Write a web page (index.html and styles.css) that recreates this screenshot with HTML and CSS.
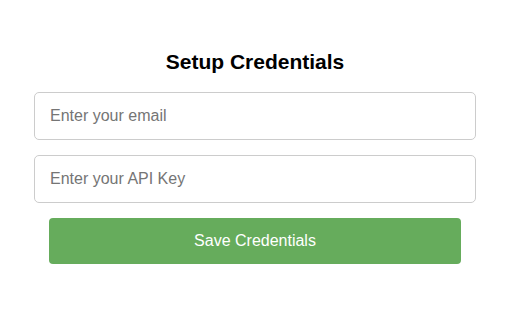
FILE: index.html
```html
<!DOCTYPE html>
<html>
<head>
<meta charset="utf-8">
<link rel="stylesheet" href="styles.css">
</head>
<body>
<div class="container">
  <h2 class="title">Setup Credentials</h2>
  <input class="field" type="email" placeholder="Enter your email">
  <input class="field" type="text" placeholder="Enter your API Key">
  <button class="save">Save Credentials</button>
</div>
</body>
</html>
```
FILE: styles.css
```css
html, body {
  margin: 0;
  padding: 0;
  background: #ffffff;
}
body {
  font-family: "Liberation Sans", Arial, sans-serif;
}
.container {
  width: 442px;
  margin: 0 0 0 34px;
  padding-top: 50px;
  display: flex;
  flex-direction: column;
  gap: 15px;
}
.title {
  margin: 0 0 3px 0;
  font-size: 21px;
  line-height: 24px;
  font-weight: bold;
  text-align: center;
  color: #000;
}
.field {
  box-sizing: border-box;
  height: 48px;
  width: 100%;
  margin: 0;
  padding: 0 15px;
  border: 1px solid #cccccc;
  border-radius: 5px;
  font-family: "Liberation Sans", Arial, sans-serif;
  font-size: 16px;
  color: #333;
  background: #fff;
  outline: none;
}
.field::placeholder {
  color: #757575;
}
.save {
  box-sizing: border-box;
  height: 46px;
  margin: 0 15px;
  border: none;
  border-radius: 4px;
  background: #66ac5c;
  color: #ffffff;
  font-family: "Liberation Sans", Arial, sans-serif;
  font-size: 16px;
  cursor: pointer;
}
```
